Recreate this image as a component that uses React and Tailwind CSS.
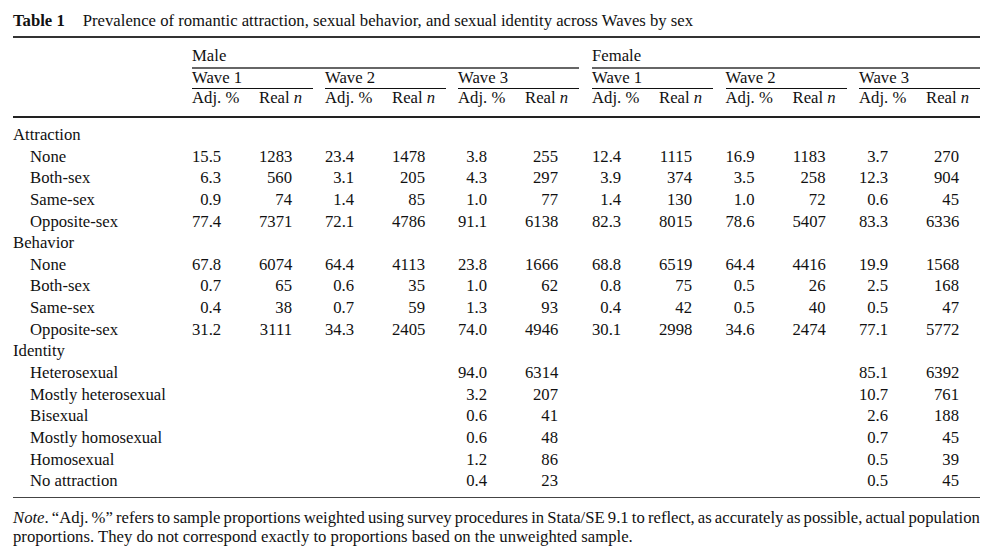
import React from "react";

const attraction = [
  ["None", ["15.5", "1283", "23.4", "1478", "3.8", "255", "12.4", "1115", "16.9", "1183", "3.7", "270"]],
  ["Both-sex", ["6.3", "560", "3.1", "205", "4.3", "297", "3.9", "374", "3.5", "258", "12.3", "904"]],
  ["Same-sex", ["0.9", "74", "1.4", "85", "1.0", "77", "1.4", "130", "1.0", "72", "0.6", "45"]],
  ["Opposite-sex", ["77.4", "7371", "72.1", "4786", "91.1", "6138", "82.3", "8015", "78.6", "5407", "83.3", "6336"]],
];
const behavior = [
  ["None", ["67.8", "6074", "64.4", "4113", "23.8", "1666", "68.8", "6519", "64.4", "4416", "19.9", "1568"]],
  ["Both-sex", ["0.7", "65", "0.6", "35", "1.0", "62", "0.8", "75", "0.5", "26", "2.5", "168"]],
  ["Same-sex", ["0.4", "38", "0.7", "59", "1.3", "93", "0.4", "42", "0.5", "40", "0.5", "47"]],
  ["Opposite-sex", ["31.2", "3111", "34.3", "2405", "74.0", "4946", "30.1", "2998", "34.6", "2474", "77.1", "5772"]],
];
const identity = [
  ["Heterosexual", ["", "", "", "", "94.0", "6314", "", "", "", "", "85.1", "6392"]],
  ["Mostly heterosexual", ["", "", "", "", "3.2", "207", "", "", "", "", "10.7", "761"]],
  ["Bisexual", ["", "", "", "", "0.6", "41", "", "", "", "", "2.6", "188"]],
  ["Mostly homosexual", ["", "", "", "", "0.6", "48", "", "", "", "", "0.7", "45"]],
  ["Homosexual", ["", "", "", "", "1.2", "86", "", "", "", "", "0.5", "39"]],
  ["No attraction", ["", "", "", "", "0.4", "23", "", "", "", "", "0.5", "45"]],
];

function Cell({ adj, n }) {
  return (
    <div className="flex w-[121px]">
      <div className="w-[67px] pr-[38px] text-right whitespace-nowrap">{adj}</div>
      <div className="w-[54px] pr-[21px] text-right whitespace-nowrap">{n}</div>
    </div>
  );
}

function Row({ label, v }) {
  return (
    <div className="flex h-[21.67px] leading-[21.67px]">
      <div className="w-[179px] pl-[17px] whitespace-nowrap">{label}</div>
      <div className="flex gap-[12px]">
        <Cell adj={v[0]} n={v[1]} />
        <Cell adj={v[2]} n={v[3]} />
        <Cell adj={v[4]} n={v[5]} />
      </div>
      <div className="ml-[13px] flex gap-[12.5px]">
        <Cell adj={v[6]} n={v[7]} />
        <Cell adj={v[8]} n={v[9]} />
        <Cell adj={v[10]} n={v[11]} />
      </div>
    </div>
  );
}

function Cat({ label }) {
  return <div className="h-[21.67px] leading-[21.67px] whitespace-nowrap">{label}</div>;
}

function WaveHead({ label }) {
  return (
    <div className="w-[121px]">
      <div className="h-[18.3px] leading-[18.3px] whitespace-nowrap">{label}</div>
      <div className="mt-[1.7px] h-px bg-[#111]" />
      <div className="flex h-[18.3px] leading-[18.3px] whitespace-nowrap">
        <div className="w-[67px]">Adj. %</div>
        <div className="w-[54px]">
          Real <span className="italic">n</span>
        </div>
      </div>
    </div>
  );
}

export default function App() {
  return (
    <div className="w-[993px] h-[555px] bg-white text-[#111] font-['Liberation_Serif','Times_New_Roman',serif] text-[16.7px] pl-[13px] pt-[11px] overflow-hidden">
      <div className="w-[967px]">
        <div className="flex h-[20px] leading-[20px] whitespace-nowrap">
          <span className="font-bold">Table 1</span>
          <span className="ml-[18px]">
            Prevalence of romantic attraction, sexual behavior, and sexual identity across Waves by sex
          </span>
        </div>
        <div className="mt-[5px] h-[1.5px] bg-[#333]" />
        <div className="mt-[8px] flex">
          <div className="w-[179px]" />
          <div className="w-[387px]">
            <div className="h-[20px] leading-[20px]">Male</div>
            <div className="mt-[1px] h-[2px] bg-[#666]" />
            <div className="flex gap-[12px]">
              <WaveHead label="Wave 1" />
              <WaveHead label="Wave 2" />
              <WaveHead label="Wave 3" />
            </div>
          </div>
          <div className="ml-[13px] w-[388px]">
            <div className="h-[20px] leading-[20px]">Female</div>
            <div className="mt-[1px] h-[2px] bg-[#666]" />
            <div className="flex gap-[12.5px]">
              <WaveHead label="Wave 1" />
              <WaveHead label="Wave 2" />
              <WaveHead label="Wave 3" />
            </div>
          </div>
        </div>
        <div className="mt-[8.5px] h-[2px] bg-[#222]" />
        <div className="mt-[5.6px]">
          <Cat label="Attraction" />
          {attraction.map(([l, v], i) => (
            <Row key={"a" + i} label={l} v={v} />
          ))}
          <Cat label="Behavior" />
          {behavior.map(([l, v], i) => (
            <Row key={"b" + i} label={l} v={v} />
          ))}
          <Cat label="Identity" />
          {identity.map(([l, v], i) => (
            <Row key={"c" + i} label={l} v={v} />
          ))}
        </div>
        <div className="mt-[4.5px] h-px bg-[#444]" />
        <div className="mt-[10px] leading-[19.7px]">
          <div className="whitespace-nowrap [word-spacing:-1.05px]">
            <span className="italic">Note</span>. “Adj. %” refers to sample proportions weighted using survey procedures
            in Stata/SE 9.1 to reflect, as accurately as possible, actual population
          </div>
          <div className="whitespace-nowrap">
            proportions. They do not correspond exactly to proportions based on the unweighted sample.
          </div>
        </div>
      </div>
    </div>
  );
}
